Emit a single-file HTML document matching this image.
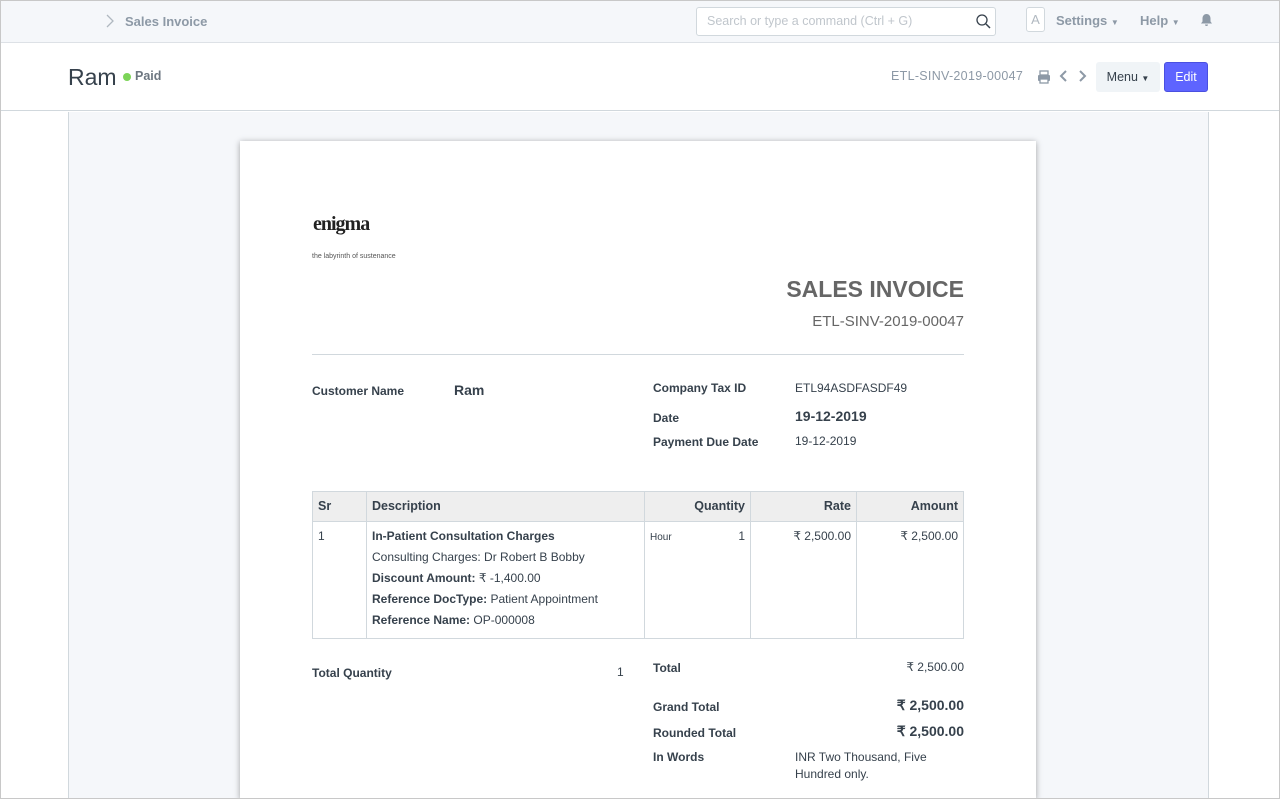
<!DOCTYPE html>
<html style="overflow:hidden;height:799px"><head><meta charset="utf-8"><style>
*{box-sizing:border-box;margin:0;padding:0}
body{width:1280px;height:799px;overflow:hidden;font-family:"Liberation Sans",sans-serif;background:#fff;position:relative;color:#36414c}
.frame{position:absolute;left:0;top:0;width:1280px;height:799px;border:1px solid #c8c8c8;pointer-events:none;z-index:10}
.nav{position:absolute;left:0;top:0;width:1280px;height:43px;background:#f5f7fa;border-bottom:1px solid #dde1e6}
.abs{position:absolute;white-space:nowrap}
.head{position:absolute;top:43px;left:0;width:1280px;height:68px;background:#fff;border-bottom:1px solid #d1d8dd}
.bg{position:absolute;top:112px;left:68px;width:1141px;height:687px;background:#f5f7fa;border-left:1px solid #d1d8dd;border-right:1px solid #d1d8dd}
.paper{position:absolute;top:141px;left:240px;width:796px;height:658px;background:#fff;box-shadow:0 1px 6px rgba(0,0,0,.35)}
.b{font-weight:bold}
table{position:absolute;left:312px;top:491px;width:652px;border-collapse:collapse;font-size:12px;color:#36414c}
td,th{border:1px solid #d1d8dd;padding:7px 5px;vertical-align:top}
th{background:#eee;text-align:left;height:30px;font-size:12.5px}
.r{text-align:right}
</style></head><body>
<div class="nav"></div>
<svg class="abs" style="left:105px;top:13px" width="10" height="16"><path d="M2 2l6 6-6 6" fill="none" stroke="#b0b8c0" stroke-width="1.3"/></svg>
<div class="abs b" style="left:125px;top:14px;font-size:13px;color:#8d99a6">Sales Invoice</div>
<div class="abs" style="left:696px;top:7px;width:300px;height:29px;background:#fff;border:1px solid #d1d8dd;border-radius:3px"></div>
<div class="abs" style="left:707px;top:14px;font-size:12.5px;color:#c0c6cc">Search or type a command (Ctrl + G)</div>
<svg class="abs" style="left:975px;top:13px" width="16" height="16"><circle cx="7" cy="7" r="5" fill="none" stroke="#36414c" stroke-width="1.3"/><path d="M11 11l4 4" stroke="#36414c" stroke-width="1.5"/></svg>
<div class="abs" style="left:1026px;top:7px;width:19px;height:25px;border:1px solid #d1d8dd;border-radius:3px;background:#fff;color:#b0b8c0;font-size:13px;text-align:center;line-height:23px">A</div>
<div class="abs b" style="left:1056px;top:13px;font-size:13px;color:#8d99a6">Settings <span style="font-size:8px">▼</span></div>
<div class="abs b" style="left:1140px;top:13px;font-size:13px;color:#8d99a6">Help <span style="font-size:8px">▼</span></div>
<svg class="abs" style="left:1200px;top:13px" width="13" height="14"><path d="M6.5 1c-2.5 0-4 2-4 4.5v3L1 10.5h11L10.5 8.5v-3C10.5 3 9 1 6.5 1zM5 11.5h3a1.5 1.5 0 0 1-3 0z" fill="#8d99a6"/></svg>

<div class="head"></div>
<div class="abs" style="left:68px;top:64px;font-size:23px;color:#36414c">Ram</div>
<div class="abs" style="left:123px;top:73px;width:8px;height:8px;border-radius:50%;background:#7cd458"></div>
<div class="abs b" style="left:135px;top:69px;font-size:12.5px;color:#6c7680">Paid</div>
<div class="abs" style="left:891px;top:69px;font-size:12.5px;color:#8d99a6;letter-spacing:.3px">ETL-SINV-2019-00047</div>
<svg class="abs" style="left:1037px;top:70px" width="14" height="14"><rect x="3" y="1" width="8" height="4" fill="none" stroke="#8d99a6" stroke-width="1.3"/><rect x="1" y="5" width="12" height="6" rx="1" fill="#8d99a6"/><rect x="3" y="9" width="8" height="4" fill="#fff" stroke="#8d99a6" stroke-width="1.3"/></svg>
<svg class="abs" style="left:1059px;top:69px" width="30" height="14"><path d="M7 2L2 7l5 5M21 2l5 5-5 5" fill="none" stroke="#8d99a6" stroke-width="2"/></svg>
<div class="abs" style="left:1096px;top:62px;width:64px;height:30px;background:#f0f4f7;border-radius:3px;font-size:12.5px;color:#36414c;line-height:30px;text-align:center">Menu <span style="font-size:8px">▼</span></div>
<div class="abs" style="left:1164px;top:62px;width:44px;height:30px;background:#5e64ff;border:1px solid #4a50e0;border-radius:3px;font-size:12.5px;color:#fff;line-height:28px;text-align:center">Edit</div>

<div class="bg"></div>
<div class="paper"></div>
<div class="abs" style="left:313px;top:213px;font-family:'Liberation Serif',serif;font-size:20px;font-weight:bold;color:#222;letter-spacing:-1px">enigma</div>
<div class="abs" style="left:312px;top:253px;font-size:7px;color:#555">the labyrinth of sustenance</div>
<div class="abs b" style="right:316px;top:276px;font-size:23px;color:#666">SALES INVOICE</div>
<div class="abs" style="right:316px;top:313px;font-size:15px;color:#666">ETL-SINV-2019-00047</div>
<div class="abs" style="left:312px;top:354px;width:652px;border-top:1px solid #d1d8dd"></div>

<div class="abs b" style="left:312px;top:384px;font-size:12px">Customer Name</div>
<div class="abs b" style="left:454px;top:382px;font-size:14px">Ram</div>
<div class="abs b" style="left:653px;top:381px;font-size:12px">Company Tax ID</div>
<div class="abs" style="left:795px;top:381px;font-size:12px">ETL94ASDFASDF49</div>
<div class="abs b" style="left:653px;top:411px;font-size:12px">Date</div>
<div class="abs b" style="left:795px;top:408px;font-size:14px">19-12-2019</div>
<div class="abs b" style="left:653px;top:435px;font-size:12px">Payment Due Date</div>
<div class="abs" style="left:795px;top:434px;font-size:12px">19-12-2019</div>

<table>
<tr><th style="width:54px">Sr</th><th style="width:278px">Description</th><th class="r" style="width:106px">Quantity</th><th class="r" style="width:106px">Rate</th><th class="r">Amount</th></tr>
<tr style="height:117px"><td>1</td><td style="line-height:21px;padding-top:4px"><b>In-Patient Consultation Charges</b><br>Consulting Charges: Dr Robert B Bobby<br><b>Discount Amount:</b> ₹ -1,400.00<br><b>Reference DocType:</b> Patient Appointment<br><b>Reference Name:</b> OP-000008</td><td><span style="font-size:10px">Hour</span><span style="float:right">1</span></td><td class="r">₹ 2,500.00</td><td class="r">₹ 2,500.00</td></tr>
</table>

<div class="abs b" style="left:312px;top:666px;font-size:12px">Total Quantity</div>
<div class="abs" style="left:617px;top:665px;font-size:12px">1</div>
<div class="abs b" style="left:653px;top:661px;font-size:12px">Total</div>
<div class="abs" style="right:316px;top:660px;font-size:12px">₹ 2,500.00</div>
<div class="abs b" style="left:653px;top:700px;font-size:12px">Grand Total</div>
<div class="abs b" style="right:316px;top:697px;font-size:14px">₹ 2,500.00</div>
<div class="abs b" style="left:653px;top:726px;font-size:12px">Rounded Total</div>
<div class="abs b" style="right:316px;top:723px;font-size:14px">₹ 2,500.00</div>
<div class="abs b" style="left:653px;top:750px;font-size:12px">In Words</div>
<div class="abs" style="left:795px;top:749px;font-size:12px;line-height:17px">INR Two Thousand, Five<br>Hundred only.</div>
<div class="frame"></div>
</body></html>
